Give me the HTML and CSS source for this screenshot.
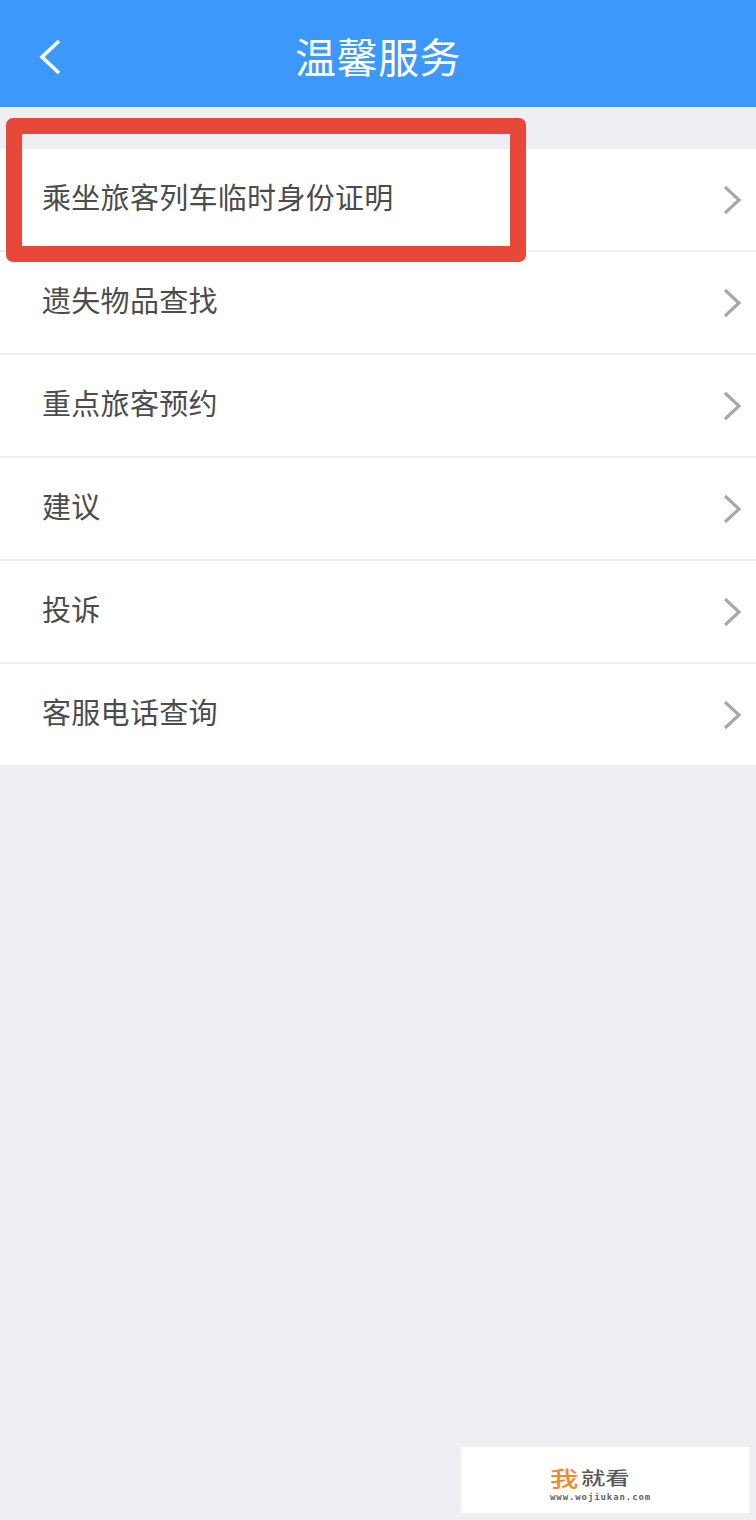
FILE: index.html
```html
<!DOCTYPE html>
<html lang="zh-CN">
<head>
    <meta charset="UTF-8">
    <meta name="viewport" content="width=device-width, initial-scale=1.0">
    <title>温馨服务</title>
    <link rel="stylesheet" href="styles.css">
</head>
<body>

<div class="page">
    <header class="top-bar">
        <svg class="back-icon" width="24" height="36" viewBox="0 0 24 36" fill="none" xmlns="http://www.w3.org/2000/svg">
            <path d="M21 2 L4 18 L21 34" stroke="#fff" stroke-width="3.6"/>
        </svg>
        <h1 class="top-title">温馨服务</h1>
    </header>

    <ul class="menu">
        <li class="menu-item"><span class="item-text">乘坐旅客列车临时身份证明</span>
            <svg class="arrow" width="20" height="30" viewBox="0 0 20 30" fill="none" xmlns="http://www.w3.org/2000/svg"><path d="M2 2 L16 15 L2 28" stroke="#a8a8a8" stroke-width="3.2"/></svg>
        </li>
        <li class="menu-item"><span class="item-text">遗失物品查找</span>
            <svg class="arrow" width="20" height="30" viewBox="0 0 20 30" fill="none" xmlns="http://www.w3.org/2000/svg"><path d="M2 2 L16 15 L2 28" stroke="#a8a8a8" stroke-width="3.2"/></svg>
        </li>
        <li class="menu-item"><span class="item-text">重点旅客预约</span>
            <svg class="arrow" width="20" height="30" viewBox="0 0 20 30" fill="none" xmlns="http://www.w3.org/2000/svg"><path d="M2 2 L16 15 L2 28" stroke="#a8a8a8" stroke-width="3.2"/></svg>
        </li>
        <li class="menu-item"><span class="item-text">建议</span>
            <svg class="arrow" width="20" height="30" viewBox="0 0 20 30" fill="none" xmlns="http://www.w3.org/2000/svg"><path d="M2 2 L16 15 L2 28" stroke="#a8a8a8" stroke-width="3.2"/></svg>
        </li>
        <li class="menu-item"><span class="item-text">投诉</span>
            <svg class="arrow" width="20" height="30" viewBox="0 0 20 30" fill="none" xmlns="http://www.w3.org/2000/svg"><path d="M2 2 L16 15 L2 28" stroke="#a8a8a8" stroke-width="3.2"/></svg>
        </li>
        <li class="menu-item"><span class="item-text">客服电话查询</span>
            <svg class="arrow" width="20" height="30" viewBox="0 0 20 30" fill="none" xmlns="http://www.w3.org/2000/svg"><path d="M2 2 L16 15 L2 28" stroke="#a8a8a8" stroke-width="3.2"/></svg>
        </li>
    </ul>

    <div class="red-mark"></div>

    <div class="watermark">
        <div class="wm-name"><span class="wm-big">我</span>就看</div>
        <div class="wm-url">www.wojiukan.com</div>
    </div>
</div>

</body>
</html>
```

FILE: styles.css
```css
body, html {
    margin: 0;
    padding: 0;
}

.page {
    position: relative;
    width: 756px;
    height: 1520px;
    overflow: hidden;
    background-color: #eeeef3;
    font-family: "Noto Sans CJK SC", "Noto Sans", sans-serif;
}

.top-bar {
    position: relative;
    height: 107px;
    display: flex;
    justify-content: center;
    align-items: center;
    background-color: #3d98fb;
}

.back-icon {
    position: absolute;
    left: 38px;
    top: 39px;
}

.top-title {
    margin: 4px 0 0;
    font-size: 41px;
    font-weight: 400;
    line-height: 103px;
    letter-spacing: 0.5px;
    color: #fff;
}

.menu {
    list-style: none;
    margin: 42px 0 0;
    padding: 0;
}

.menu-item {
    height: 101px;
    padding: 0 13px 0 42px;
    display: flex;
    justify-content: space-between;
    align-items: center;
    background-color: #fff;
    border-bottom: 2px solid #f0f0f3;
    font-size: 29px;
    letter-spacing: 0.3px;
    color: #4c4c4c;
}

.menu-item:last-child {
    border-bottom: none;
}

.item-text {
    margin-bottom: 8px;
}

.red-mark {
    position: absolute;
    left: 6px;
    top: 118px;
    width: 488px;
    height: 112px;
    border: 16px solid #e8483a;
    border-radius: 7px;
}

.watermark {
    position: absolute;
    left: 461px;
    top: 1447px;
    width: 288px;
    height: 66px;
    padding-left: 89px;
    box-sizing: border-box;
    display: flex;
    flex-direction: column;
    align-items: flex-start;
    justify-content: flex-end;
    background-color: #fff;
    color: #5a5a5a;
}

/* the logo letters are wider than tall */
.wm-name {
    display: flex;
    align-items: center;
    margin-bottom: 2px;
    font-family: "Liberation Sans", "Noto Sans CJK SC", sans-serif;
    font-size: 18px;
    line-height: 22px;
    font-weight: 500;
    transform: scaleX(1.35);
    transform-origin: left center;
}

.wm-big {
    margin-right: 2px;
    font-size: 21px;
    color: #f08a2c;
}

.wm-url {
    margin-bottom: 11px;
    font-family: "DejaVu Sans Mono", monospace;
    font-size: 9px;
    font-weight: 700;
    line-height: 10px;
    letter-spacing: 0.9px;
    color: #666;
}
```
